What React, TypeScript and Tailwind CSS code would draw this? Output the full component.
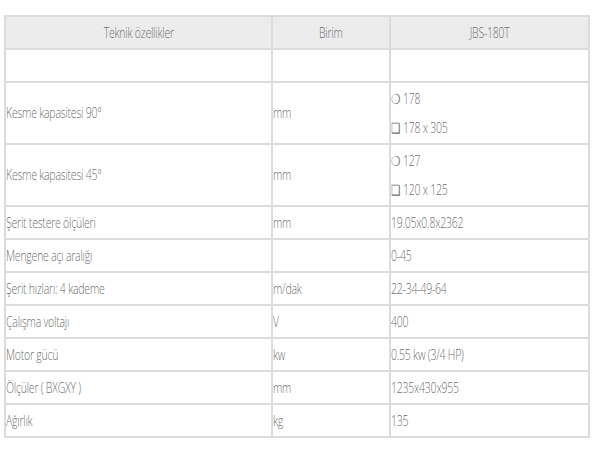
const rows: { name: string; unit: string; value: string[]; tall?: boolean }[] = [
  { name: "Kesme kapasitesi 90°", unit: "mm", value: ["❍ 178", "❑ 178 x 305"], tall: true },
  { name: "Kesme kapasitesi 45°", unit: "mm", value: ["❍ 127", "❑ 120 x 125"], tall: true },
  { name: "Şerit testere ölçüleri", unit: "mm", value: ["19.05x0.8x2362"] },
  { name: "Mengene açı aralığı", unit: "", value: ["0-45"] },
  { name: "Şerit hızları: 4 kademe", unit: "m/dak", value: ["22-34-49-64"] },
  { name: "Çalışma voltajı", unit: "V", value: ["400"] },
  { name: "Motor gücü", unit: "kw", value: ["0.55 kw (3/4 HP)"] },
  { name: "Ölçüler ( BXGXY )", unit: "mm", value: ["1235x430x955"] },
  { name: "Ağırlık", unit: "kg", value: ["135"] },
];

// text in the screenshot is narrow and tall, so squeeze it horizontally
const Txt = ({ children, center }: { children: React.ReactNode; center?: boolean }) => (
  <span
    className={`inline-block whitespace-nowrap scale-x-75 ${center ? "origin-center" : "origin-left"}`}
  >
    {children}
  </span>
);

const cell = "border-2 border-[#dcdcdc] p-0 align-middle";

export default function App() {
  return (
    <div className="w-[600px] h-[450px] bg-white pt-[15px] pl-[4px]">
      <table
        className="w-[586px] border-collapse text-[14px] leading-[20px] font-light text-[#707070] tracking-[-0.3px]"
        style={{ fontFamily: '"Open Sans", "DejaVu Sans", sans-serif' }}
      >
        <colgroup>
          <col className="w-[267px]" />
          <col className="w-[118px]" />
          <col />
        </colgroup>
        <thead>
          <tr className="h-[33px] bg-[#ececec]">
            <th className={`${cell} font-light text-center`}>
              <Txt center>Teknik özellikler</Txt>
            </th>
            <th className={`${cell} font-light text-center`}>
              <Txt center>Birim</Txt>
            </th>
            <th className={`${cell} font-light text-center`}>
              <Txt center>JBS-180T</Txt>
            </th>
          </tr>
        </thead>
        <tbody>
          <tr className="h-[33px]">
            <td className={cell}></td>
            <td className={cell}></td>
            <td className={cell}></td>
          </tr>
          {rows.map((r) => (
            <tr key={r.name} className={r.tall ? "h-[62px]" : "h-[33px]"}>
              <td className={cell}>
                <Txt>{r.name}</Txt>
              </td>
              <td className={cell}>
                <Txt>{r.unit}</Txt>
              </td>
              <td className={cell}>
                <div className="flex flex-col gap-[9px]">
                  {r.value.map((v) => (
                    <Txt key={v}>{v}</Txt>
                  ))}
                </div>
              </td>
            </tr>
          ))}
        </tbody>
      </table>
    </div>
  );
}
